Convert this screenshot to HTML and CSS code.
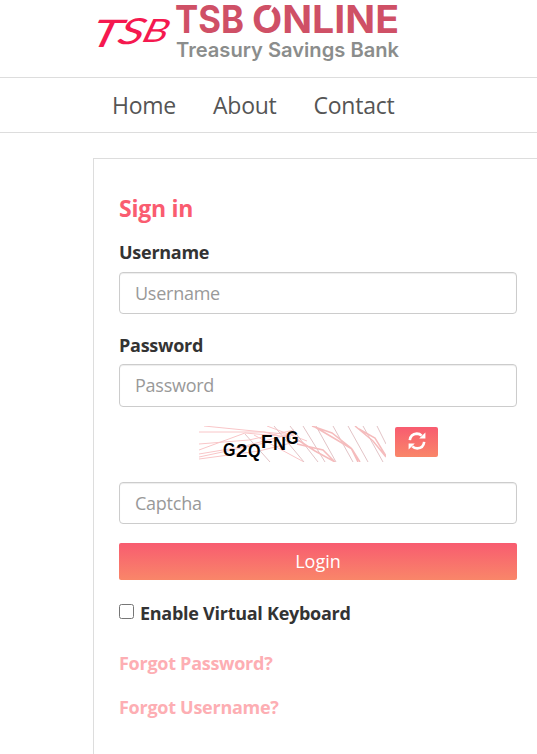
FILE: index.html
```html
<!DOCTYPE html>
<html lang="en">
<head>
  <meta charset="UTF-8">
  <title>TSB Online</title>
  <meta name="viewport" content="width=device-width, initial-scale=1.0">
  <link rel="stylesheet" href="styles.css">
</head>
<body>

  <header class="header">
    <svg class="logo" width="310" height="66" viewBox="0 0 310 66">
      <g class="logo-mark" transform="translate(5 47) skewX(-25)">
        <text x="-13" y="0" font-size="38" textLength="30" lengthAdjust="spacingAndGlyphs">T</text>
        <text x="14" y="-3" font-size="36" textLength="25" lengthAdjust="spacingAndGlyphs">S</text>
        <text x="38" y="-5" font-size="32" textLength="25" lengthAdjust="spacingAndGlyphs">B</text>
      </g>
      <text class="logo-name" x="81" y="33" textLength="69" lengthAdjust="spacingAndGlyphs">TSB</text>
      <text class="logo-name" x="158" y="33" textLength="147" lengthAdjust="spacingAndGlyphs">ONLINE</text>
      <path d="M174 14l7-11" stroke="#fff" stroke-width="2.5"/>
      <text class="logo-sub" x="82" y="57" textLength="223" lengthAdjust="spacingAndGlyphs">Treasury Savings Bank</text>
    </svg>
  </header>

  <nav class="nav">
    <a href="#">Home</a>
    <a href="#">About</a>
    <a href="#">Contact</a>
  </nav>

  <div class="login-box">
    <h1>Sign in</h1>

    <label for="username">Username</label>
    <input class="field" type="text" id="username" placeholder="Username">

    <label for="password">Password</label>
    <input class="field" type="password" id="password" placeholder="Password">

    <div class="captcha">
      <svg class="captcha-img" width="187" height="36" viewBox="0 0 187 36">
        <g fill="none" stroke="#f9c6c8" stroke-width="1">
          <path d="M0 6h65l27 7M0 24L46 7l46 4M0 18l50-4 45-10M0 33l60-8 40-10M5 0l90 9M0 28l42-7 54-14M55 9l50 27M0 31l80-17M68 0l40 15"/>
        </g>
        <g fill="none" stroke="#e2c3c6" stroke-width="1">
          <path d="M46 8l25 28M75 0l30 36M91 0l28 36M104 0l22 36M117 0l20 36M134 0l20 36M149 0l20 36M164 0l20 36M178 0l9 18"/>
        </g>
        <g fill="none" stroke="#f5bcbd" stroke-width="1.5">
          <path d="M96 12l20 13 20 11M98 18l26 6 12 12M116 1l22 13 15 9 8 13M113 0l20 7 19 15 7 14M156 0l18 15 13 16M160 3l16 9 11 18"/>
        </g>
        <g class="captcha-text">
          <text x="24" y="30" textLength="12.5" lengthAdjust="spacingAndGlyphs">G</text>
          <text x="37" y="31" textLength="11.5" lengthAdjust="spacingAndGlyphs">2</text>
          <text x="49" y="31" textLength="12.5" lengthAdjust="spacingAndGlyphs">Q</text>
          <text x="62" y="22" textLength="11.5" lengthAdjust="spacingAndGlyphs">F</text>
          <text x="74" y="24" textLength="13" lengthAdjust="spacingAndGlyphs">N</text>
          <text x="87" y="18" textLength="12.5" lengthAdjust="spacingAndGlyphs">G</text>
        </g>
      </svg>
      <button class="refresh" type="button" aria-label="Refresh">
        <svg width="18" height="18" viewBox="0 0 18 18">
          <path d="M1.8 8.2C2.3 4 5 1.8 8.8 1.6c2 0 3.6.7 4.8 2M16.2 9.8c-.5 4.2-3.2 6.4-7 6.6-2 0-3.6-.7-4.8-2" fill="none" stroke="#fff" stroke-width="2.6"/>
          <path d="M17.4.4v6.2h-6.2zM.6 17.6v-6.2h6.2z" fill="#fff"/>
        </svg>
      </button>
    </div>

    <input class="field" type="text" id="captcha" placeholder="Captcha">

    <button class="login-btn" type="button">Login</button>

    <label class="check"><input type="checkbox" id="keyboard">Enable Virtual Keyboard</label>

    <a class="forgot" href="#">Forgot Password?</a>
    <a class="forgot" href="#">Forgot Username?</a>
  </div>

</body>
</html>
```

FILE: styles.css
```css
* {
  box-sizing: border-box;
}

body {
  margin: 0;
  background-color: #fff;
  color: #333;
  font-family: "Open Sans", sans-serif;
  font-size: 18px;
  line-height: 26px;
  overflow: hidden;
}

.header {
  height: 78px;
  padding-left: 94px;
  border-bottom: 1px solid #ddd;
}

.logo {
  display: block;
  overflow: visible;
}

.logo-mark {
  fill: #f5194f;
  font-family: Lato, sans-serif;
}

.logo-name {
  fill: #cf5066;
  font-family: Inter, sans-serif;
  font-size: 38px;
  font-weight: 700;
}

.logo-sub {
  fill: #8b8d8c;
  font-family: Inter, sans-serif;
  font-size: 20px;
  font-weight: 600;
}

.nav {
  display: flex;
  align-items: center;
  gap: 37px;
  height: 55px;
  padding-left: 112px;
  border-bottom: 1px solid #ddd;
}

.nav a {
  color: #555;
  font-size: 23px;
  letter-spacing: -0.25px;
  text-decoration: none;
}

.login-box {
  width: 450px;
  height: 620px;
  margin: 25px 0 0 93px;
  padding: 33px 26px 0 25px;
  border: 1px solid #ddd;
}

h1 {
  margin: 0 0 15px;
  color: #fa5c70;
  font-size: 23px;
  font-weight: 700;
  letter-spacing: -0.25px;
  line-height: 32px;
}

label {
  display: block;
  margin-bottom: 7px;
  font-weight: 700;
  letter-spacing: -0.27px;
}

.field {
  display: block;
  width: 398px;
  height: 42px;
  margin: 0 0 18px;
  padding: 6px 15px;
  border: 1px solid #ccc;
  border-radius: 4px;
  box-shadow: inset 0 1px 1px rgba(0, 0, 0, 0.075);
  font: inherit;
  letter-spacing: -0.25px;
}

.field::placeholder {
  color: #999;
}

#password {
  height: 43px;
  margin-bottom: 19px;
  padding-bottom: 8px;
}

#captcha {
  margin-bottom: 19px;
}

label[for="password"] {
  margin-bottom: 6px;
}

.captcha {
  display: flex;
  align-items: flex-start;
  gap: 9px;
  height: 56px;
  padding-left: 80px;
}

.captcha-text {
  font-family: "Liberation Sans", sans-serif;
  font-size: 18px;
  font-weight: 700;
}

.refresh,
.login-btn {
  border: 0;
  border-radius: 2px;
  background: linear-gradient(#f85c70, #f98669);
  color: #fff;
  font: inherit;
}

.refresh {
  display: flex;
  align-items: center;
  justify-content: center;
  width: 43px;
  height: 30px;
  margin-top: 1px;
  padding: 0 0 2px;
}

.login-btn {
  display: block;
  width: 398px;
  height: 37px;
  margin-bottom: 20px;
  padding: 0 0 2px;
}

.check {
  display: flex;
  margin-bottom: 24px;
}

.check input {
  width: 15px;
  height: 15px;
  margin: 4px 6px 0 0;
}

.forgot {
  display: block;
  margin-bottom: 18px;
  color: #fdaeb3;
  font-weight: 700;
  letter-spacing: -0.27px;
  text-decoration: none;
}
```
